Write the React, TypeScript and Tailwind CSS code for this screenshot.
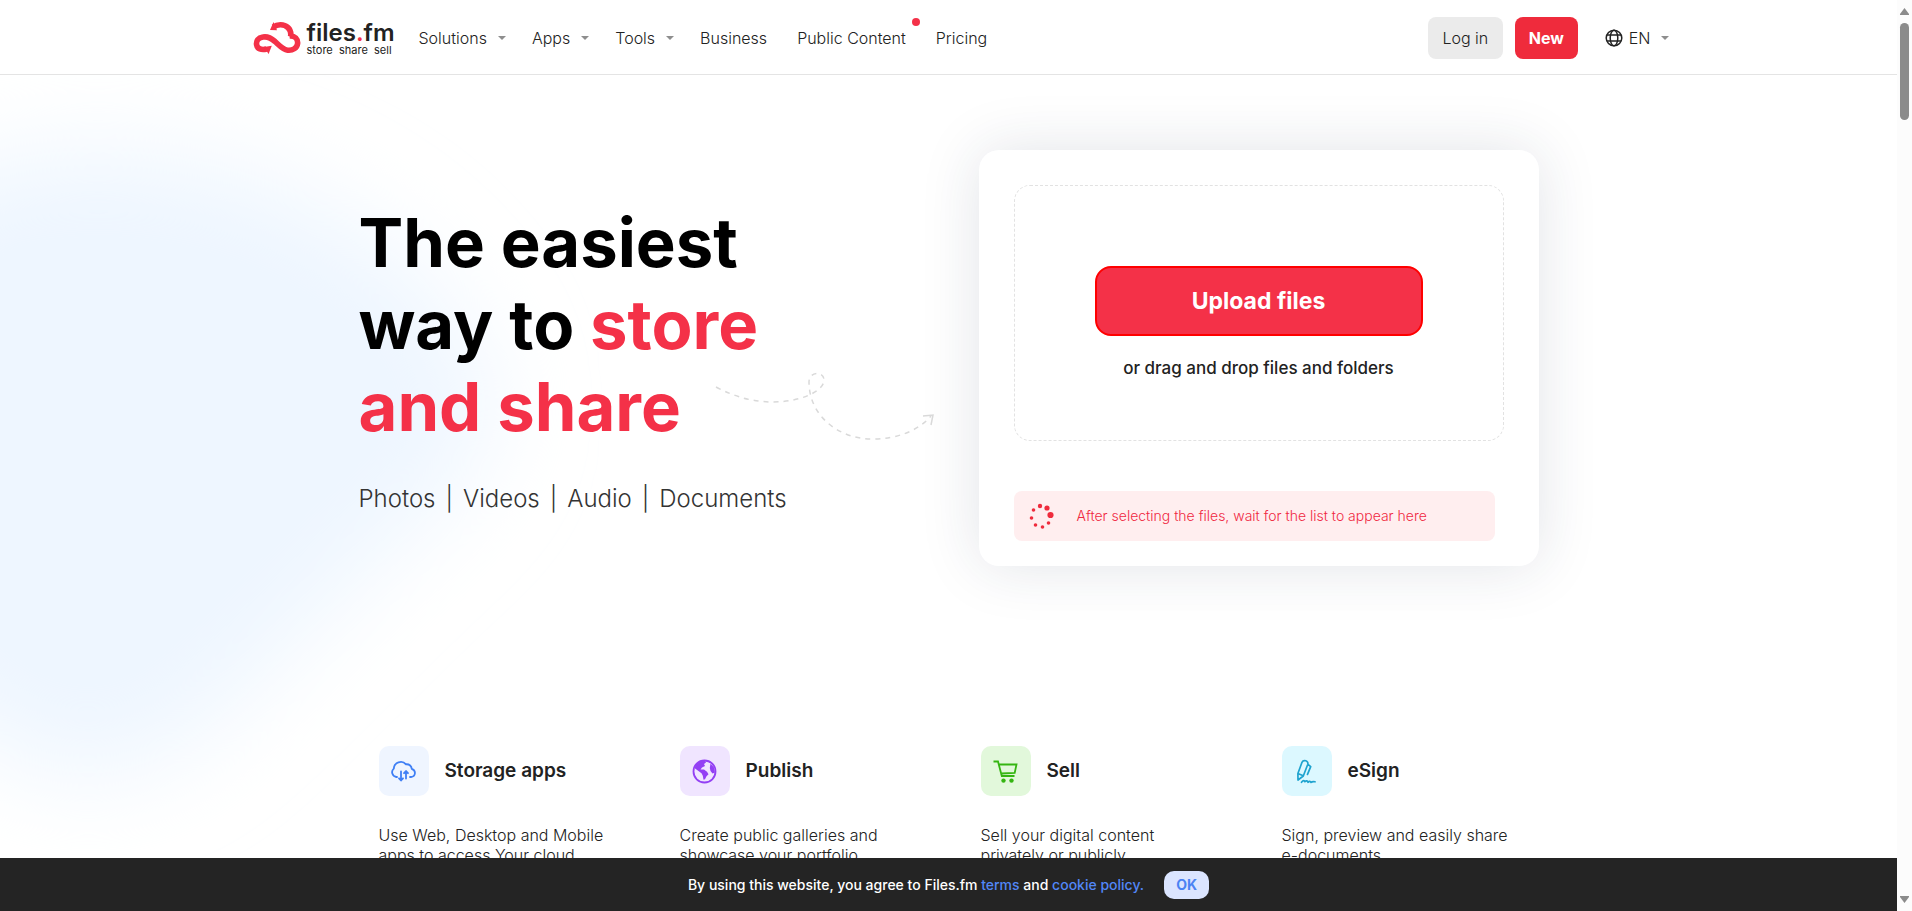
import React from "react";

const caret = (
  <svg width="8" height="4" viewBox="0 0 8 4" fill="#8e8e8e" aria-hidden="true">
    <path d="M0 0h8L4 4z" />
  </svg>
);

function Logo() {
  return (
    <a href="#" className="flex items-center gap-1.5">
      <svg width="48" height="32" viewBox="0 0 48 32" fill="none" aria-hidden="true">
        <g stroke="#f43148" strokeWidth="5.6">
          <path d="M20.5 5C24 2.2 31 1.8 35 5.6c2.600 2.500 3.200 5.600 2.600 9" />
          <path d="M36.500 14C42 13.500 45 17 44.600 21.500c-.5 4.500-5 7.300-10 6.700-4.600-.6-8-4.500-12.600-8.700-3.500-3-7-5.500-12-4.400C5 16 3 19 3.600 22.700 4.300 26.800 8.500 28.500 13.500 27" />
        </g>
        <path d="M17 8 20.500 0l3.500 8.200z" fill="#f43148" />
        <path d="M18.800 23.700 15.600 32l-4.700-7z" fill="#f43148" />
      </svg>
      <span className="flex flex-col">
        <span className="text-2xl font-semibold leading-6 text-[#222]">
          files<span className="text-[#f43148]">.</span>fm
        </span>
        <span className="text-[11px] leading-[10px] text-[#222]">store&nbsp; share&nbsp; sell</span>
      </span>
    </a>
  );
}

const nav = [
  { label: "Solutions", menu: true },
  { label: "Apps", menu: true },
  { label: "Tools", menu: true },
  { label: "Business" },
  { label: "Public Content", dot: true },
  { label: "Pricing" },
];

function Header() {
  return (
    <header className="border-b border-[#e4e4e4] bg-white">
      <div className="mx-auto flex h-[74px] max-w-[1440px] items-center pt-0.5 pl-6">
        <Logo />
        <nav className="flex items-center pl-6">
          {nav.map((n) => (
            <a
              key={n.label}
              href="#"
              className={
                "relative flex items-center gap-[11px] text-base font-light text-[#222] " +
                (n.menu ? "pr-[26px]" : "pr-[30px]")
              }
            >
              {n.label}
              {n.menu && caret}
              {n.dot && <span className="absolute -top-2 right-4 size-2 rounded-full bg-[#f43148]" />}
            </a>
          ))}
        </nav>
        <div className="ml-auto flex items-center gap-3">
          <button className="h-[42px] w-[75px] rounded-lg bg-[#ebebeb] text-base font-light text-[#222]">Log in</button>
          <button className="h-[42px] w-[63px] rounded-lg bg-[#ef2b3c] text-base font-bold text-white">New</button>
          <button className="flex items-center gap-1.5 pl-[15px] text-base font-light text-[#222]">
            <svg width="18" height="18" viewBox="0 0 18 18" fill="none" stroke="#222" strokeWidth="1.500" aria-hidden="true">
              <circle cx="9" cy="9" r="7.800" />
              <ellipse cx="9" cy="9" rx="3.800" ry="7.800" />
              <path d="M2 6h14M2 12h14" />
            </svg>
            EN
            <span className="pl-1">{caret}</span>
          </button>
        </div>
      </div>
    </header>
  );
}

function Spinner() {
  const dots = [
    [11, 3, 2.2], [18, 5, 2.6], [21.500, 12, 3.100], [19.500, 20, 1.800],
    [13.500, 24, 1.800], [6.500, 22, 1.800], [2.500, 15, 1.800], [4.500, 7, 1.800],
  ];
  return (
    <svg width="26" height="26" viewBox="0 0 26 26" fill="#ef2b3c" aria-hidden="true">
      {dots.map(([x, y, r]) => (
        <circle key={x} cx={x} cy={y} r={r} />
      ))}
    </svg>
  );
}

function UploadCard() {
  return (
    <div className="w-[560px] rounded-[20px] bg-white px-[35px] pt-[35px] pb-[25px] shadow-[0_0_60px_rgba(30,50,80,0.13)]">
      <div className="flex h-64 flex-col items-center rounded-2xl border border-dashed border-[#e2e2e2] pt-20">
        <button className="h-[70px] w-[328px] rounded-2xl border-2 border-[#ff0000] bg-[#f43148] text-[23px] font-bold text-white">
          Upload files
        </button>
        <p className="mt-5 text-[17px] font-medium leading-6 text-[#222]">or drag and drop files and folders</p>
      </div>
      <div className="mt-[50px] mr-[9px] flex h-[50px] items-center gap-[22px] rounded-lg bg-[#ffeeef] pl-[15px]">
        <Spinner />
        <span className="text-sm font-light text-[#f0283f]">After selecting the files, wait for the list to appear here</span>
      </div>
    </div>
  );
}

function Hero() {
  return (
    <section className="mx-auto flex w-full max-w-[1180px] justify-between pt-[75px]">
      <div className="relative pt-[52px]">
        <h1 className="text-[67px] font-bold leading-[82px] text-black">
          The easiest
          <br />
          way to <span className="text-[#f43148]">store</span>
          <br />
          <span className="text-[#f43148]">and share</span>
        </h1>
        <p className="mt-[34px] flex items-center gap-[10px] text-2xl font-light leading-[34px] text-[#333]">
          <span>Photos</span>
          <span>|</span>
          <span>Videos</span>
          <span>|</span>
          <span>Audio</span>
          <span>|</span>
          <span>Documents</span>
        </p>
        <svg
          className="absolute top-[220px] left-[356px]"
          width="220" height="72" viewBox="0 0 220 72" fill="none" stroke="#d9d9d9" strokeWidth="1.500" aria-hidden="true"
        >
          <path
            strokeDasharray="5 5"
            d="M1 17C22 28 40 32 58 32c28 0 51-11 51-22 0-9-15-9-15 2 0 34 30 57 63 57 25 0 46-8 59-23"
          />
          <path d="M208 46l10-1-2 10" />
        </svg>
      </div>
      <UploadCard />
    </section>
  );
}

const features = [
  {
    title: "Storage apps",
    text: ["Use Web, Desktop and Mobile", "apps to access Your cloud"],
    box: "bg-[#eff5ff]",
    icon: (
      <g fill="none" stroke="#3f7ff5" strokeWidth="1.800" strokeLinecap="round" strokeLinejoin="round">
        <path d="M6 18H5.300A4.800 4.800 0 0 1 2.800 9.600 7 7 0 0 1 15 5.300c3.500-.3 5.600 2 5.700 4.500 4.600 1.500 4.200 7.500-.7 8.200h-1" />
        <path d="M10 12.500v8M8 19.300l2 2.200 2-2.200M15 19.500v-7M13 14.200l2-2.200 2 2.200" />
      </g>
    ),
  },
  {
    title: "Publish",
    text: ["Create public galleries and", "showcase your portfolio"],
    box: "bg-[#f0e5ff]",
    icon: (
      <g>
        <circle cx="12.500" cy="12.500" r="11" fill="none" stroke="#9340f4" strokeWidth="1.800" />
        <path
          fill="#9340f4"
          d="M3 8C5 4 9 1.500 13 1.700l1 1.800-2 1.500 1 2-3 1.500-1.500 2H12l3 2.300 1.500 2.500-2 2-1.500 3-1.500.5-.7-4-1.300-2.500-2-1.500L3 9.500zM18.500 4.500l3.500 4 1 5-2.500 1-2-2.500-.7-3z"
        />
      </g>
    ),
  },
  {
    title: "Sell",
    text: ["Sell your digital content", "privately or publicly"],
    box: "bg-[#e2f8db]",
    icon: (
      <g fill="none" stroke="#35b512" strokeWidth="1.800">
        <path d="M.5 2.500H5l3.800 14.500h12.700M6 5.500h17.500l-1.800 8.500-13.500.5" />
        <circle cx="10.500" cy="21.600" r="2.200" fill="#35b512" stroke="none" />
        <circle cx="18.500" cy="21.600" r="2.200" fill="#35b512" stroke="none" />
      </g>
    ),
  },
  {
    title: "eSign",
    text: ["Sign, preview and easily share", "e-documents"],
    box: "bg-[#dcf8ff]",
    icon: (
      <g fill="none" stroke="#1ea3cf" strokeWidth="1.700" strokeLinecap="round" strokeLinejoin="round">
        <path d="M4 21 3.900 14.500 8 3.300c1.400-3.200 7-1.500 5.700 2.200L9.300 17 4 21zM3.900 14.500l5.400 2.200M14 5.300l2.700 2.300-3.200 7.800" />
        <path d="M7.500 23.300c1.800-2.300 3-2 3.200-.6 1.600-1.200 2.700-1 3.300.6 1.300-1.400 2.400-1.200 3 .1 1.200-1 2.400-1 4-.6" />
      </g>
    ),
  },
];

function Features() {
  return (
    <section className="mx-auto mt-[180px] grid w-full max-w-[1140px] grid-cols-4 gap-16">
      {features.map((f) => (
        <article key={f.title}>
          <div className="flex items-center gap-4">
            <span className={"flex size-[50px] items-center justify-center rounded-[10px] " + f.box}>
              <svg width="25" height="25" viewBox="0 0 25 25" aria-hidden="true">
                {f.icon}
              </svg>
            </span>
            <h2 className="text-[19px] font-semibold text-[#222]">{f.title}</h2>
          </div>
          <p className="mt-[29px] whitespace-nowrap text-base font-light leading-5 text-[#222]">
            {f.text[0]}
            <br />
            {f.text[1]}
          </p>
        </article>
      ))}
    </section>
  );
}

function CookieBar() {
  return (
    <footer className="relative flex h-[53px] shrink-0 items-center justify-center gap-5 bg-[#242424] text-sm font-medium text-white">
      <p>
        By using this website, you agree to Files.fm{" "}
        <a href="#" className="text-[#5287f7]">terms</a> and{" "}
        <a href="#" className="text-[#5287f7]">cookie policy.</a>
      </p>
      <button className="h-7 w-[45px] rounded-[10px] bg-[#dbe5ff] font-bold text-[#4b83f3]">OK</button>
    </footer>
  );
}

function ScrollRail() {
  return (
    <aside className="flex w-[15px] shrink-0 flex-col items-center bg-[#fcfcfc] py-2">
      <svg width="9" height="7" viewBox="0 0 9 7" fill="#8b8b8b" aria-hidden="true">
        <path d="M4.500 0 9 6v1H0V6z" />
      </svg>
      <span className="mt-2 h-[97px] w-[9px] rounded-full bg-[#8b8b8b]" />
      <svg className="mt-auto" width="9" height="7" viewBox="0 0 9 7" fill="#8b8b8b" aria-hidden="true">
        <path d="M4.500 7 9 1V0H0v1z" />
      </svg>
    </aside>
  );
}

export default function App() {
  return (
    <div className="flex h-screen bg-white font-['Inter',sans-serif]">
      <div className="flex min-w-0 flex-1 flex-col">
        <Header />
        <main className="relative min-h-0 flex-1 overflow-hidden">
          <svg className="absolute top-0 left-0" width="760" height="840" viewBox="0 0 760 840" aria-hidden="true">
            <defs>
              <filter id="glow" x="-50%" y="-50%" width="200%" height="200%">
                <feGaussianBlur stdDeviation="48" />
              </filter>
            </defs>
            <path
              filter="url(#glow)"
              fill="#eef6ff"
              d="M-100 130C20 40 270 60 410 190c100 100 110 160 30 240C350 510 280 590 200 660 90 750-30 690-120 560z"
            />
          </svg>
          <div className="relative">
            <Hero />
            <Features />
          </div>
        </main>
        <CookieBar />
      </div>
      <ScrollRail />
    </div>
  );
}
